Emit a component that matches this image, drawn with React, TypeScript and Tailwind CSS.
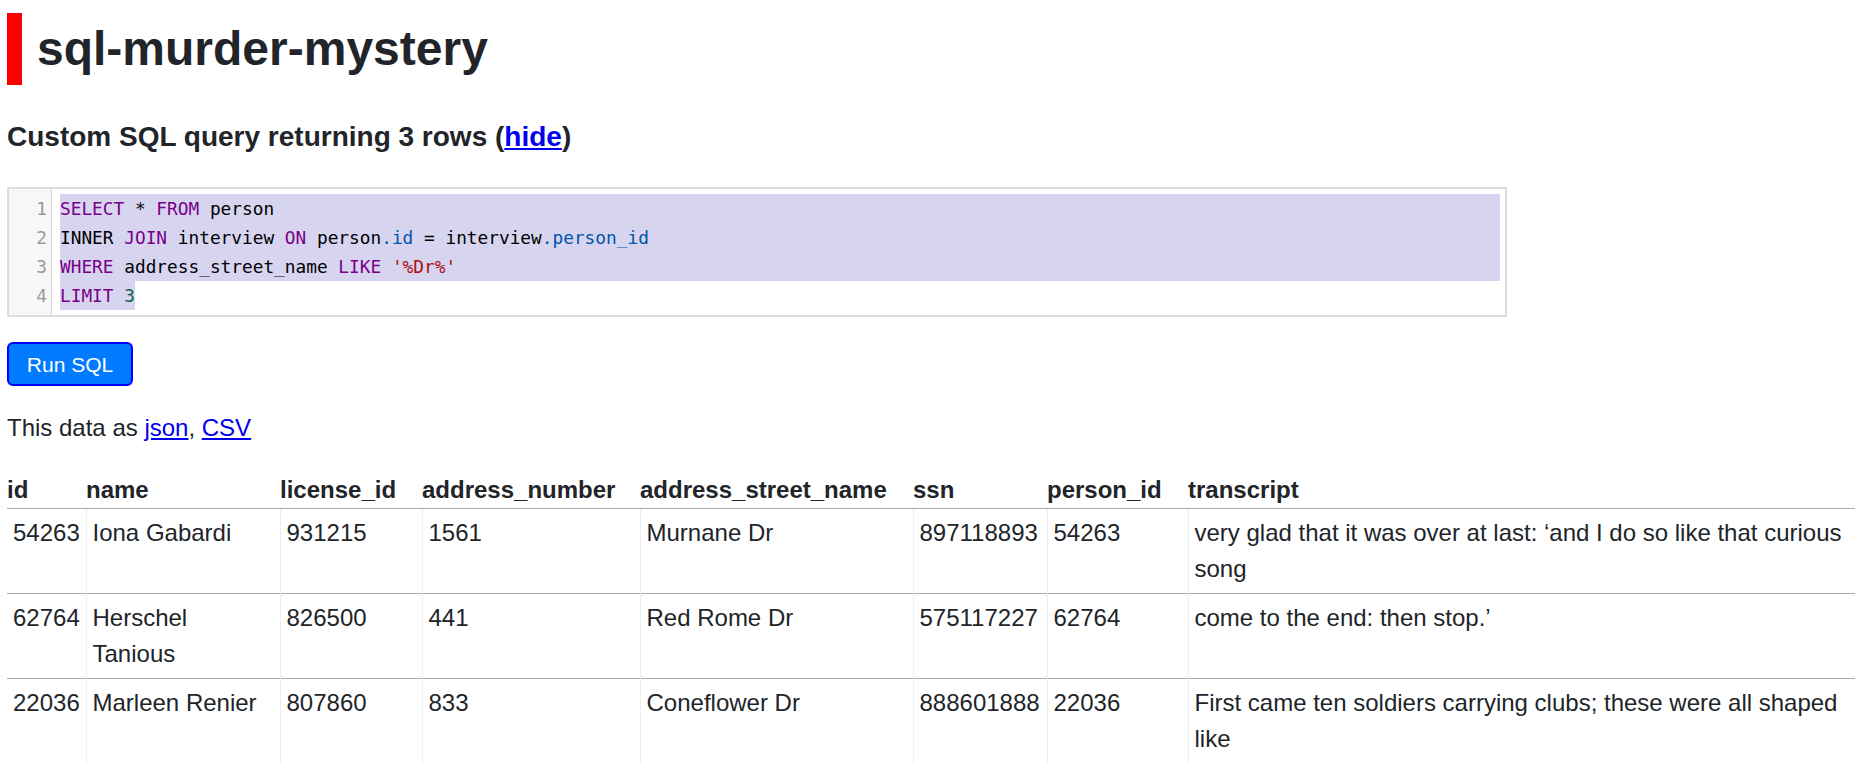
const kw = 'text-[#770088]';
const prop = 'text-[#0055aa]';

const rows = [
  {
    id: '54263',
    name: 'Iona Gabardi',
    license_id: '931215',
    address_number: '1561',
    address_street_name: 'Murnane Dr',
    ssn: '897118893',
    person_id: '54263',
    transcript: 'very glad that it was over at last: ‘and I do so like that curious song',
  },
  {
    id: '62764',
    name: 'Herschel Tanious',
    license_id: '826500',
    address_number: '441',
    address_street_name: 'Red Rome Dr',
    ssn: '575117227',
    person_id: '62764',
    transcript: 'come to the end: then stop.’',
  },
  {
    id: '22036',
    name: 'Marleen Renier',
    license_id: '807860',
    address_number: '833',
    address_street_name: 'Coneflower Dr',
    ssn: '888601888',
    person_id: '22036',
    transcript: 'First came ten soldiers carrying clubs; these were all shaped like',
  },
];

const columns = [
  { key: 'id', width: 'w-[79px]' },
  { key: 'name', width: 'w-[194px]' },
  { key: 'license_id', width: 'w-[142px]' },
  { key: 'address_number', width: 'w-[218px]' },
  { key: 'address_street_name', width: 'w-[273px]' },
  { key: 'ssn', width: 'w-[134px]' },
  { key: 'person_id', width: 'w-[141px]' },
  { key: 'transcript', width: 'w-[667px]' },
] as const;

function CodeEditor() {
  return (
    <div className="mt-[29px] w-[1500px] border-2 border-[#dddddd] bg-white flex font-['DejaVu_Sans_Mono',monospace] text-[17.8px] leading-[29px]">
      <div className="w-[43px] shrink-0 bg-[#f7f7f7] border-r border-[#dddddd] py-[5px] pr-[4px] text-right text-[#999999]">
        <div>1</div>
        <div>2</div>
        <div>3</div>
        <div>4</div>
      </div>
      <div className="flex-1 py-[5px] pl-[8px] pr-[5px] text-black whitespace-pre">
        <div className="bg-[#d7d4f0]">
          <span className={kw}>SELECT</span> * <span className={kw}>FROM</span> person
        </div>
        <div className="bg-[#d7d4f0]">
          INNER <span className={kw}>JOIN</span> interview <span className={kw}>ON</span> person
          <span className={prop}>.id</span> = interview<span className={prop}>.person_id</span>
        </div>
        <div className="bg-[#d7d4f0]">
          <span className={kw}>WHERE</span> address_street_name <span className={kw}>LIKE</span>{' '}
          <span className="text-[#aa1111]">'%Dr%'</span>
        </div>
        <div>
          <span className="bg-[#d7d4f0] inline-block">
            <span className={kw}>LIMIT</span> <span className="text-[#116644]">3</span>
          </span>
        </div>
      </div>
    </div>
  );
}

export default function App() {
  return (
    <div className="min-h-screen overflow-hidden bg-white pl-[7px] font-['Liberation_Sans',Arial,sans-serif] text-[24px] leading-[36px] text-[#212529]">
      <h1 className="mt-[13px] h-[72px] border-l-[15px] border-[#ff0000] pl-[15px] text-[48px] font-bold leading-[72px]">
        sql-murder-mystery
      </h1>

      <h2 className="mt-[31px] text-[28px] font-bold leading-[42px]">
        Custom SQL query returning 3 rows (
        <a href="#" className="text-[#0000ee] underline">
          hide
        </a>
        )
      </h2>

      <CodeEditor />

      <button className="mt-[25px] h-[44px] w-[126px] rounded-[6px] border-2 border-[#0000ff] bg-[#007bff] text-[21px] leading-none text-white">
        Run SQL
      </button>

      <p className="mt-[24px]">
        This data as{' '}
        <a href="#" className="text-[#0000ee] underline">
          json
        </a>
        ,{' '}
        <a href="#" className="text-[#0000ee] underline">
          CSV
        </a>
      </p>

      <table className="mt-[25px] w-[1848px] table-fixed border-collapse">
        <colgroup>
          {columns.map((c) => (
            <col key={c.key} className={c.width} />
          ))}
        </colgroup>
        <thead>
          <tr>
            {columns.map((c) => (
              <th key={c.key} className="pt-px text-left font-bold whitespace-nowrap">
                {c.key}
              </th>
            ))}
          </tr>
        </thead>
        <tbody>
          {rows.map((r) => (
            <tr key={r.id}>
              {columns.map((c, i) => (
                <td
                  key={c.key}
                  className={
                    'border-t border-t-[#aaaaaa] p-[6px] align-top ' +
                    (i > 0 ? 'border-l border-l-[#eeeeee]' : '')
                  }
                >
                  {r[c.key]}
                </td>
              ))}
            </tr>
          ))}
        </tbody>
      </table>
    </div>
  );
}
